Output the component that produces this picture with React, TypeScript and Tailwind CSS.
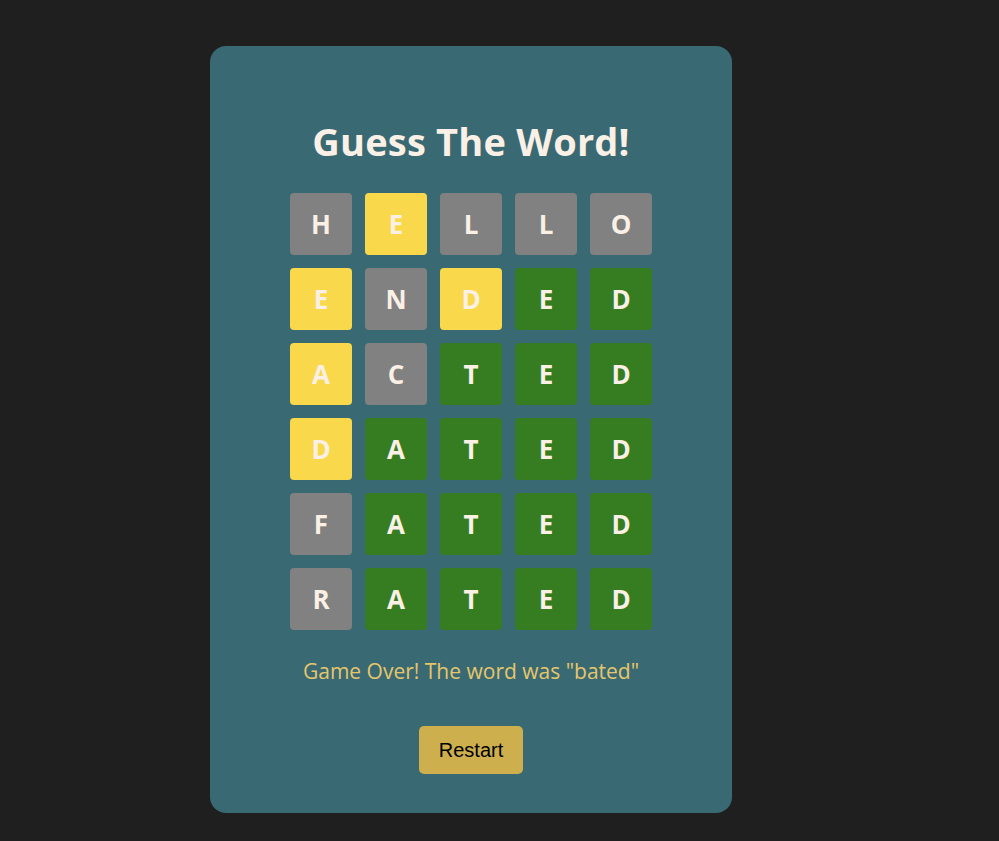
const rows: { l: string; c: 'g' | 'y' | 'n' }[][] = [
  [
    { l: 'H', c: 'n' },
    { l: 'E', c: 'y' },
    { l: 'L', c: 'n' },
    { l: 'L', c: 'n' },
    { l: 'O', c: 'n' },
  ],
  [
    { l: 'E', c: 'y' },
    { l: 'N', c: 'n' },
    { l: 'D', c: 'y' },
    { l: 'E', c: 'g' },
    { l: 'D', c: 'g' },
  ],
  [
    { l: 'A', c: 'y' },
    { l: 'C', c: 'n' },
    { l: 'T', c: 'g' },
    { l: 'E', c: 'g' },
    { l: 'D', c: 'g' },
  ],
  [
    { l: 'D', c: 'y' },
    { l: 'A', c: 'g' },
    { l: 'T', c: 'g' },
    { l: 'E', c: 'g' },
    { l: 'D', c: 'g' },
  ],
  [
    { l: 'F', c: 'n' },
    { l: 'A', c: 'g' },
    { l: 'T', c: 'g' },
    { l: 'E', c: 'g' },
    { l: 'D', c: 'g' },
  ],
  [
    { l: 'R', c: 'n' },
    { l: 'A', c: 'g' },
    { l: 'T', c: 'g' },
    { l: 'E', c: 'g' },
    { l: 'D', c: 'g' },
  ],
];

const tileBg = {
  g: 'bg-[#367d22]',
  y: 'bg-[#f9d94b]',
  n: 'bg-[#818181]',
};

export default function App() {
  return (
    <div className="min-h-[841px] bg-[#201f20] pl-[210px] pt-[46px] font-['Open_Sans',sans-serif]">
      <div className="flex w-[522px] h-[767px] flex-col items-center rounded-2xl bg-[#396973] pt-[73px]">
        <h1 className="text-[38px] leading-[45px] font-bold tracking-[0.2px] text-[#faf0e6]">Guess The Word!</h1>
        <div className="mt-[29px] grid grid-cols-5 gap-[13px]">
          {rows.flat().map((t, i) => (
            <div
              key={i}
              className={`flex h-[62px] w-[62px] items-center justify-center rounded-[4px] text-[26px] font-bold text-[#faf0e6] ${tileBg[t.c]}`}
            >
              {t.l}
            </div>
          ))}
        </div>
        <p className="mt-[27px] text-[21px] leading-[28px] text-[#e6c66b]">Game Over! The word was "bated"</p>
        <button className="mt-[41px] h-[48px] w-[104px] rounded-[5px] bg-[#cdaf4e] font-['Liberation_Sans',sans-serif] text-[20px] text-black">
          Restart
        </button>
      </div>
    </div>
  );
}
